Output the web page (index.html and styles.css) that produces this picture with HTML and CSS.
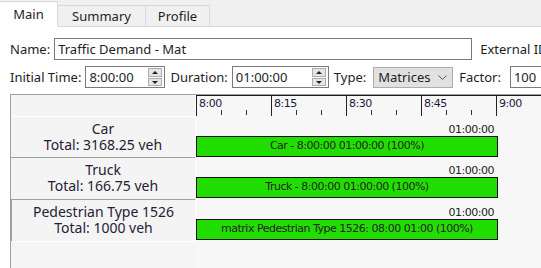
FILE: index.html
```html
<!DOCTYPE html>
<html lang="en">
<head>
	<meta charset="UTF-8">
	<title>Traffic Demand</title>
	<link rel="stylesheet" href="styles.css">
</head>
<body>
	<nav class="tabs">
		<div class="tab active">Main</div>
		<div class="tab">Summary</div>
		<div class="tab">Profile</div>
		<div class="tab-rest"></div>
	</nav>
	<main class="page">
		<section class="row">
			<label class="lbl">Name:</label>
			<div class="field name">Traffic Demand - Mat</div>
			<label class="lbl ext">External ID</label>
		</section>
		<section class="row">
			<label class="lbl">Initial Time:</label>
			<div class="field spin itime">8:00:00
				<span class="spinbtns"><i class="up"></i><i class="down"></i></span>
			</div>
			<label class="lbl">Duration:</label>
			<div class="field spin dur">01:00:00
				<span class="spinbtns"><i class="up"></i><i class="down"></i></span>
			</div>
			<label class="lbl">Type:</label>
			<div class="select">Matrices
				<svg class="chev" width="9" height="6" viewBox="0 0 9 6"><path d="M0.5 0.5 L4.5 4.5 L8.5 0.5" fill="none" stroke="#555" stroke-width="1"/></svg>
			</div>
			<label class="lbl">Factor:</label>
			<div class="field factor">100</div>
		</section>

		<section class="grid">
			<div class="side head"></div>
			<div class="scale">
				<div class="major" style="left:0px"><span>8:00</span></div>
				<div class="minor" style="left:25px"></div>
				<div class="minor" style="left:50px"></div>
				<div class="major" style="left:75px"><span>8:15</span></div>
				<div class="minor" style="left:100px"></div>
				<div class="minor" style="left:125px"></div>
				<div class="major" style="left:150px"><span>8:30</span></div>
				<div class="minor" style="left:175px"></div>
				<div class="minor" style="left:200px"></div>
				<div class="major" style="left:225px"><span>8:45</span></div>
				<div class="minor" style="left:250px"></div>
				<div class="minor" style="left:275px"></div>
				<div class="major" style="left:300px"><span>9:00</span></div>
			</div>

			<div class="side">
				<div class="vname">Car</div>
				<div class="vtotal">Total: 3168.25 veh</div>
			</div>
			<div class="lane">
				<div class="dur-label">01:00:00</div>
				<div class="bar">Car - 8:00:00 01:00:00 (100%)</div>
			</div>

			<div class="side">
				<div class="vname">Truck</div>
				<div class="vtotal">Total: 166.75 veh</div>
			</div>
			<div class="lane">
				<div class="dur-label">01:00:00</div>
				<div class="bar">Truck - 8:00:00 01:00:00 (100%)</div>
			</div>

			<div class="side current">
				<div class="vname">Pedestrian Type 1526</div>
				<div class="vtotal">Total: 1000 veh</div>
			</div>
			<div class="lane">
				<div class="dur-label">01:00:00</div>
				<div class="bar">matrix Pedestrian Type 1526: 08:00 01:00 (100%)</div>
			</div>

			<div class="side empty"></div>
			<div class="lane empty"></div>
		</section>
	</main>
</body>
</html>
```

FILE: styles.css
```css
body {
	margin: 0;
	background: #fff;
	font: 13px "Noto Sans", "Open Sans", sans-serif;
	color: #1e1e1e;
	width: 541px;
	height: 268px;
	overflow: hidden;
}
/* tabs */
nav.tabs {
	display: flex;
	align-items: flex-end;
	height: 27px;
	background: #f0f0f0;
}
nav.tabs .tab {
	height: 22px;
	line-height: 21px;
	padding: 0;
	text-align: center;
	border: 1px solid #d9d9d9;
	border-left: none;
	background: #f0f0f0;
	box-sizing: border-box;
}
nav.tabs .tab.active {
	height: 26px;
	line-height: 24px;
	width: 58px;
	background: #fff;
	border-bottom-color: #fff;
}
nav.tabs .tab:nth-child(2) { width: 88px; }
nav.tabs .tab:nth-child(3) { width: 64px; }
nav.tabs .tab-rest {
	flex: 1;
	border-bottom: 1px solid #d9d9d9;
}
/* form */
main.page {
	padding-top: 11px;
}
section.row {
	display: flex;
	align-items: center;
	gap: 4px;
	padding-left: 10px;
	height: 22px;
	margin-bottom: 6px;
	white-space: nowrap;
}
.lbl {
	flex: none;
}
.lbl.ext {
	margin-left: 4px;
}
.field {
	flex: none;
	box-sizing: border-box;
	height: 22px;
	line-height: 20px;
	border: 1px solid #7a7a7a;
	background: #fff;
	padding-left: 3px;
	position: relative;
}
.field.name  { width: 418px; }
.field.itime { width: 80px; margin-right: 1px; }
.field.dur   { width: 97px; margin-right: 1px; }
.field.factor { width: 60px; margin-left: 5px; }
.spinbtns {
	position: absolute;
	right: 2px;
	top: 1px;
	width: 14px;
	height: 18px;
	display: flex;
	flex-direction: column;
	gap: 1px;
}
.spinbtns i {
	flex: 1;
	background: #e5e5e5;
	border: 1px solid #acacac;
	position: relative;
}
.spinbtns i::after {
	content: "";
	position: absolute;
	left: 3px;
	top: 2px;
	border-left: 3px solid transparent;
	border-right: 3px solid transparent;
}
.spinbtns i.up::after { border-bottom: 3px solid #222; }
.spinbtns i.down::after { border-top: 3px solid #222; }
.select {
	flex: none;
	box-sizing: border-box;
	width: 80px;
	height: 21px;
	line-height: 19px;
	padding-left: 4px;
	margin-left: 3px;
	margin-right: 2px;
	background: #e1e1e1;
	border: 1px solid #adadad;
	position: relative;
}
.select .chev {
	position: absolute;
	right: 5px;
	top: 7px;
}
/* grid */
section.grid {
	display: grid;
	grid-template-columns: 185px 1fr;
	grid-template-rows: 22px 41px 42px 42px 1fr;
	margin: 1px 0 0 10px;
	height: 173px;
	border-left: 1px solid #a0a0a0;
	border-top: 1px solid #a0a0a0;
	background: #f5f5f5;
}
.side {
	text-align: center;
	font-size: 14px;
	line-height: 16px;
	padding-top: 4px;
	box-sizing: border-box;
	border-bottom: 1px solid #a0a0a0;
	border-right: 1px solid #fff;
	color: #1f2233;
	background: #f4f4f4;
	white-space: nowrap;
}
.side.head {
	border-bottom: 1px solid #fff;
	padding: 0;
}
.side.current {
	border-left: 2px solid #a0a0a0;
	border-top: 1px solid #a0a0a0;
	border-bottom: 1px solid #fff;
	margin-top: -1px;
	margin-left: -1px;
}
.side.empty {
	border: none;
	background: #f5f5f5;
}
.scale {
	position: relative;
	border-top: 1px solid #1a1a1a;
	background: #f7f7f7;
	font: 11px "DejaVu Sans", sans-serif;
	letter-spacing: -0.5px;
	color: #1a1a40;
}
.scale .major {
	position: absolute;
	top: 0;
	bottom: 1px;
	border-left: 1px solid #222;
}
.scale .major span {
	position: absolute;
	left: 2px;
	top: 1px;
}
.scale .minor {
	position: absolute;
	bottom: 2px;
	height: 5px;
	border-left: 1px solid #333;
}
.lane {
	display: flex;
	flex-direction: column;
	align-items: flex-start;
	background: #f7f7f7;
}
.dur-label {
	width: 298px;
	text-align: right;
	font: 11px "DejaVu Sans", sans-serif;
	letter-spacing: -0.5px;
	color: #222;
	margin-top: 7px;
	height: 12px;
	line-height: 12px;
}
.bar {
	box-sizing: border-box;
	width: 302px;
	height: 21px;
	line-height: 19px;
	padding-top: 2px;
	background: #22de00;
	border: 1px solid #111;
	text-align: center;
	font: 11px "DejaVu Sans", sans-serif;
	letter-spacing: -0.5px;
	color: #222;
	white-space: nowrap;
	overflow: hidden;
}
```
